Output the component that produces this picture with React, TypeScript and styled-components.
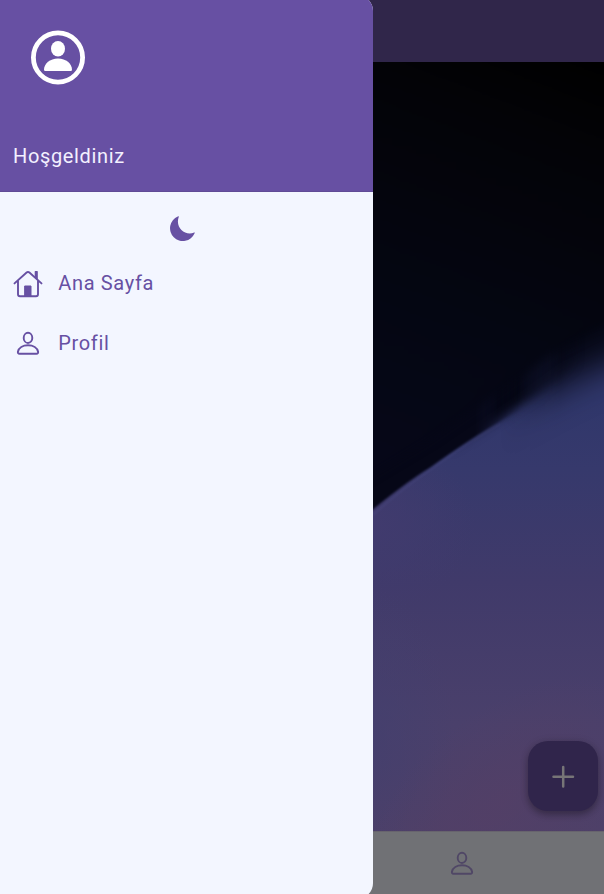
import React from "react";
import styled, { createGlobalStyle } from "styled-components";

const GlobalStyle = createGlobalStyle`
  html, body, #root { margin: 0; height: 100%; }
  body { overflow: hidden; font-family: Roboto, sans-serif; background: #000; }
  * { box-sizing: border-box; }
`;

const Screen = styled.div`
  position: relative;
  height: 894px;
  width: 604px;
  overflow: hidden;
`;

const Page = styled.div`
  height: 100%;
  display: flex;
  flex-direction: column;
`;

const AppBar = styled.header`
  height: 62px;
  flex: none;
  background: #30264a;
`;

const Content = styled.main`
  position: relative;
  flex: 1;
  min-height: 0;
`;

const Wallpaper = styled.svg`
  display: block;
  width: 604px;
  height: 770px;
`;

const TabBar = styled.nav`
  position: relative;
  height: 63px;
  flex: none;
  display: grid;
  grid-template-columns: 319px 285px;
  align-items: center;
  justify-items: center;
  background: #707175;
  border-top: 1px solid #67646d;
  color: #504766;
`;

const AddButton = styled.button`
  position: absolute;
  right: 6px;
  bottom: 20px;
  width: 70px;
  height: 70px;
  padding: 0;
  border: 0;
  border-radius: 20px;
  background: #30254b;
  color: #777577;
  display: grid;
  place-items: center;
  box-shadow: 0 4px 7px rgba(0, 0, 0, 0.24), 0 1px 8px rgba(0, 0, 0, 0.14);
`;

const Drawer = styled.aside`
  position: absolute;
  top: -5px;
  left: 0;
  bottom: -5px;
  width: 373px;
  border-radius: 0 16px 16px 0;
  overflow: hidden;
  background: #f3f6ff;
  color: #6750a3;
  display: flex;
  flex-direction: column;
`;

const DrawerHeader = styled.div`
  height: 197px;
  flex: none;
  padding: 35px 13px 23px;
  display: flex;
  flex-direction: column;
  justify-content: space-between;
  background: #6750a3;
  border-bottom: 1px solid #604b96;
  color: #fff;
`;

const Avatar = styled.svg`
  margin-left: 17px;
  width: 56px;
  height: 56px;
`;

const Label = styled.span`
  font-size: 20px;
  line-height: 24px;
  letter-spacing: 0.65px;
`;

const Greeting = styled(Label)`
  color: #f3f0ff;
`;

const ThemeRow = styled.div`
  height: 61px;
  padding: 23px 0 0 168px;
`;

const MenuItem = styled.a`
  height: 60px;
  padding-left: 13px;
  display: flex;
  align-items: center;
  gap: 15.3px;
`;

const Icon = styled.svg<{ $weight?: number }>`
  display: block;
  width: 30px;
  height: 30px;
  fill: none;
  stroke: currentColor;
  stroke-width: ${(p) => p.$weight ?? 1.9};
  stroke-linecap: round;
  stroke-linejoin: round;
`;

const PersonIcon = () => (
  <Icon viewBox="0 0 30 30">
    <ellipse cx="15" cy="9.9" rx="4.3" ry="5.1" />
    <path d="M6.5 25.7h17c1.3 0 1.8-.8 1.6-2-.8-3.9-4.9-6.5-10.1-6.5S5.7 19.8 4.9 23.7c-.2 1.2.3 2 1.6 2Z" />
  </Icon>
);

const HomeIcon = () => (
  <Icon viewBox="0 0 30 30">
    <path d="M1.5 15.4 13.6 4.5q1.4-1.2 2.8 0L28.5 15.4M5 12.9V26.2q0 2 2 2h16q2 0 2-2V12.9" />
    <path d="M12 18h6V28h-6Z" fill="currentColor" strokeWidth="1" />
    <path d="M22.4 3.6h1.7v7.2l-1.7-1.6Z" fill="currentColor" strokeWidth="1.4" />
  </Icon>
);

const MoonIcon = () => (
  <Icon viewBox="0 0 30 30">
    <path
      d="M10.8 1.7C10.8 1.2 10.4 1.2 9.8 1.5A12.8 12.8 0 1 0 26.6 18.3C26.9 17.7 26.9 17.3 26.2 17.5C17 21.3 6.8 12.5 10.8 1.7Z"
      fill="currentColor"
      stroke="none"
    />
  </Icon>
);

function WaveWallpaper() {
  return (
    <Wallpaper viewBox="0 62 604 770">
      <defs>
        <linearGradient id="sky" gradientUnits="userSpaceOnUse" x1="600" y1="62" x2="440" y2="480">
          <stop offset="0" stopColor="#000000" />
          <stop offset="0.2" stopColor="#030307" />
          <stop offset="0.65" stopColor="#040612" />
          <stop offset="1" stopColor="#060718" />
        </linearGradient>
        <linearGradient id="wave" gradientUnits="userSpaceOnUse" x1="0" y1="400" x2="0" y2="832">
          <stop offset="0" stopColor="#30376b" />
          <stop offset="0.16" stopColor="#36396c" />
          <stop offset="0.42" stopColor="#403a6a" />
          <stop offset="0.75" stopColor="#4a406b" />
          <stop offset="1" stopColor="#4e4068" />
        </linearGradient>
        <radialGradient id="rose" gradientUnits="userSpaceOnUse" cx="0" cy="0" r="1" gradientTransform="translate(500 805) rotate(-40) scale(170 90)">
          <stop offset="0" stopColor="#533f66" stopOpacity="0.8" />
          <stop offset="1" stopColor="#533f66" stopOpacity="0" />
        </radialGradient>
        <radialGradient id="violet" gradientUnits="userSpaceOnUse" cx="0" cy="0" r="1" gradientTransform="translate(365 525) scale(110 90)">
          <stop offset="0" stopColor="#413b6e" />
          <stop offset="1" stopColor="#413b6e" stopOpacity="0" />
        </radialGradient>
        <radialGradient id="indigo" gradientUnits="userSpaceOnUse" cx="0" cy="0" r="1" gradientTransform="translate(365 735) scale(90 150)">
          <stop offset="0" stopColor="#433f6e" stopOpacity="0.8" />
          <stop offset="1" stopColor="#433f6e" stopOpacity="0" />
        </radialGradient>
        <linearGradient id="fadeSharp" gradientUnits="userSpaceOnUse" x1="475" y1="0" x2="520" y2="0">
          <stop offset="0" stopColor="#fff" />
          <stop offset="1" stopColor="#fff" stopOpacity="0" />
        </linearGradient>
        <linearGradient id="fadeMedium" gradientUnits="userSpaceOnUse" x1="450" y1="0" x2="585" y2="0">
          <stop offset="0" stopColor="#fff" stopOpacity="0" />
          <stop offset="0.35" stopColor="#fff" />
          <stop offset="0.5" stopColor="#fff" />
          <stop offset="1" stopColor="#fff" stopOpacity="0" />
        </linearGradient>
        <linearGradient id="fadeSoft" gradientUnits="userSpaceOnUse" x1="500" y1="0" x2="560" y2="0">
          <stop offset="0" stopColor="#fff" stopOpacity="0" />
          <stop offset="1" stopColor="#fff" />
        </linearGradient>
        <mask id="left" maskUnits="userSpaceOnUse" x="0" y="62" width="604" height="770">
          <rect y="62" width="604" height="770" fill="url(#fadeSharp)" />
        </mask>
        <mask id="middle" maskUnits="userSpaceOnUse" x="0" y="62" width="604" height="770">
          <rect y="62" width="604" height="770" fill="url(#fadeMedium)" />
        </mask>
        <mask id="right" maskUnits="userSpaceOnUse" x="0" y="62" width="604" height="770">
          <rect y="62" width="604" height="770" fill="url(#fadeSoft)" />
        </mask>
        <filter id="soft" filterUnits="userSpaceOnUse" x="300" y="-50" width="450" height="700" colorInterpolationFilters="sRGB">
          <feGaussianBlur stdDeviation="17" />
        </filter>
        <filter id="medium" filterUnits="userSpaceOnUse" x="300" y="-50" width="450" height="700" colorInterpolationFilters="sRGB">
          <feGaussianBlur stdDeviation="5" />
        </filter>
        <filter id="fine" filterUnits="userSpaceOnUse" x="300" y="-50" width="450" height="700" colorInterpolationFilters="sRGB">
          <feGaussianBlur stdDeviation="1.2" />
        </filter>
      </defs>
      <rect y="62" width="604" height="770" fill="url(#wave)" />
      <rect y="62" width="604" height="770" fill="url(#violet)" />
      <rect y="62" width="604" height="770" fill="url(#indigo)" />
      <rect y="62" width="604" height="770" fill="url(#rose)" />
      <path d="M373 515Q402 489 430 470Q470 440 500 424" fill="none" stroke="#51518a" strokeWidth="1.5" opacity=".35" filter="url(#fine)" />
      <g mask="url(#right)">
        <path d="M340 -50V500L500 418L560 386L604 366L740 310V-50Z" fill="#060816" filter="url(#soft)" />
      </g>
      <g mask="url(#middle)">
        <path d="M340 -50V530Q400 480 440 458L500 418L535 396L570 371L604 345L740 240V-50Z" fill="#050715" filter="url(#medium)" />
      </g>
      <g mask="url(#left)">
        <path d="M330 -50V546Q392 491 430 467.5Q470 439 495 424L530 403L604 352V-50Z" fill="#060717" filter="url(#fine)" />
      </g>
      <path d="M330 -50H740V250L604 326L550 355L500 392L430 440L330 500Z" fill="url(#sky)" filter="url(#medium)" />
    </Wallpaper>
  );
}

export default function App() {
  return (
    <>
      <GlobalStyle />
      <Screen>
        <Page>
          <AppBar />
          <Content>
            <WaveWallpaper />
            <AddButton aria-label="Ekle">
              <Icon viewBox="0 0 30 30" $weight={2.5}>
                <path d="M15.2 6v19.5M5.5 15.7h19.5" />
              </Icon>
            </AddButton>
          </Content>
          <TabBar>
            <HomeIcon />
            <PersonIcon />
          </TabBar>
        </Page>
        <Drawer>
          <DrawerHeader>
            <Avatar viewBox="0 0 56 56">
              <circle cx="28" cy="27.5" r="24.6" fill="none" stroke="#fff" strokeWidth="4.8" />
              <ellipse cx="28" cy="18.7" rx="7" ry="7.7" fill="#fff" />
              <path d="M14 39.8C14 33.5 20 28.5 28 28.5S42 33.5 42 39.8Q42 41 40.8 41H15.2Q14 41 14 39.8Z" fill="#fff" />
            </Avatar>
            <Greeting>Hoşgeldiniz</Greeting>
          </DrawerHeader>
          <ThemeRow>
            <MoonIcon />
          </ThemeRow>
          <MenuItem>
            <HomeIcon />
            <Label>Ana Sayfa</Label>
          </MenuItem>
          <MenuItem>
            <PersonIcon />
            <Label>Profil</Label>
          </MenuItem>
        </Drawer>
      </Screen>
    </>
  );
}
